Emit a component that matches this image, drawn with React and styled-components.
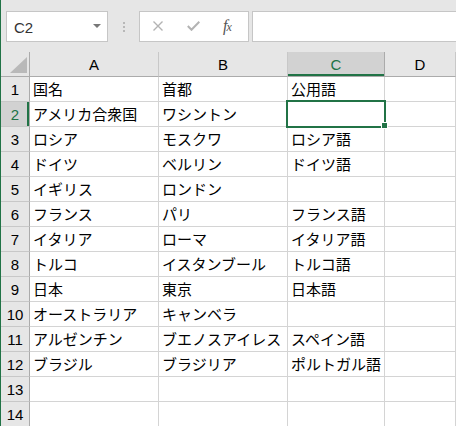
import React from 'react';
import styled, { createGlobalStyle } from 'styled-components';

const GlobalStyle = createGlobalStyle`
  html, body {
    margin: 0;
    padding: 0;
    background: #ffffff;
  }
  body {
    font-family: "Liberation Sans", Arial, sans-serif;
  }
`;

const GREEN = '#217346';

const Window = styled.div`
  width: 456px;
  height: 426px;
  overflow: hidden;
  border-left: 1px solid ${GREEN};
  box-sizing: border-box;
  display: flex;
  flex-direction: column;
  background: #e6e6e6;
`;

const FormulaBar = styled.div`
  height: 52px;
  flex: none;
  display: flex;
  align-items: flex-start;
  padding: 11px 0 0 5px;
  box-sizing: border-box;
  background: #e6e6e6;
`;

const NameBox = styled.div`
  width: 102px;
  height: 31px;
  box-sizing: border-box;
  background: #fff;
  border: 1px solid #c6c6c6;
  display: flex;
  align-items: center;
  justify-content: space-between;
  padding: 1px 6px 0 7px;
  font-size: 15px;
  color: #333;
`;

const Caret = styled.span`
  width: 0;
  height: 0;
  border-left: 4px solid transparent;
  border-right: 4px solid transparent;
  border-top: 4px solid #777;
  margin-bottom: 3px;
`;

const Grip = styled.div`
  width: 31px;
  height: 31px;
  display: flex;
  flex-direction: column;
  align-items: center;
  justify-content: center;
  gap: 2px;
  & > span {
    width: 2px;
    height: 2px;
    background: #b8b8b8;
  }
`;

const IconBox = styled.div`
  width: 110px;
  height: 31px;
  box-sizing: border-box;
  background: #fff;
  border: 1px solid #c6c6c6;
  display: flex;
  align-items: center;
  padding: 0 0 1px 13px;
  gap: 24px;
`;

const Fx = styled.span`
  font-family: "Liberation Serif", "DejaVu Serif", serif;
  font-style: italic;
  font-size: 16px;
  line-height: 1;
  color: #555;
  margin-left: -1px;
  & > span {
    font-size: 12px;
    margin-left: -1px;
  }
`;

const FormulaInput = styled.div`
  flex: 1;
  height: 31px;
  margin-left: 3px;
  box-sizing: border-box;
  background: #fff;
  border: 1px solid #c6c6c6;
  border-right: none;
`;

const Sheet = styled.div`
  flex: 1;
  display: grid;
  grid-template-columns: 29px 129px 129px 97px 1fr;
  grid-auto-rows: 25px;
  background: #fff;
`;

const Corner = styled.div`
  background: #e6e6e6;
  border-right: 1px solid #ababab;
  border-bottom: 1px solid #ababab;
  box-sizing: border-box;
  display: flex;
  align-items: flex-end;
  justify-content: flex-end;
  padding: 0 2px 3px 0;
`;

const ColHead = styled.div`
  box-sizing: border-box;
  background: ${p => (p.$active ? '#d2d2d2' : '#e6e6e6')};
  color: ${p => (p.$active ? GREEN : '#000')};
  border-right: 1px solid ${p => (p.$active ? '#ababab' : '#c8c8c8')};
  border-bottom: 1px solid #ababab;
  box-shadow: ${p => (p.$active ? `inset 0 -2px 0 ${GREEN}` : 'none')};
  display: flex;
  align-items: center;
  justify-content: center;
  font-size: 15px;
  padding-top: 1px;
`;

const RowHead = styled.div`
  box-sizing: border-box;
  background: ${p => (p.$active ? '#d2d2d2' : '#e6e6e6')};
  color: ${p => (p.$active ? GREEN : '#000')};
  border-right: 1px solid #ababab;
  border-bottom: 1px solid #c8c8c8;
  box-shadow: ${p => (p.$active ? `inset -2px 0 0 ${GREEN}` : 'none')};
  display: flex;
  align-items: center;
  justify-content: center;
  font-size: 15px;
  padding-top: 1px;
`;

const Cell = styled.div`
  position: relative;
  box-sizing: border-box;
  border-right: 1px solid #d4d4d4;
  border-bottom: 1px solid #d4d4d4;
  padding: 0 0 2px 3px;
  display: flex;
  align-items: center;
  white-space: nowrap;
  font-family: "Noto Sans CJK JP", "Liberation Sans", sans-serif;
  font-size: 15px;
  line-height: 1;
  color: #000;
  z-index: ${p => (p.$selected ? 2 : 1)};
`;

const Selection = styled.div`
  position: absolute;
  left: -2px;
  top: -2px;
  width: 100px;
  height: 28px;
  box-sizing: border-box;
  border: 2px solid ${GREEN};
  pointer-events: none;
`;

const Handle = styled.div`
  position: absolute;
  left: 93px;
  top: 20px;
  width: 7px;
  height: 7px;
  box-sizing: border-box;
  background: ${GREEN};
  border: 1px solid #fff;
`;

const columns = ['A', 'B', 'C', 'D'];

const rows = [
  ['国名', '首都', '公用語'],
  ['アメリカ合衆国', 'ワシントン', ''],
  ['ロシア', 'モスクワ', 'ロシア語'],
  ['ドイツ', 'ベルリン', 'ドイツ語'],
  ['イギリス', 'ロンドン', ''],
  ['フランス', 'パリ', 'フランス語'],
  ['イタリア', 'ローマ', 'イタリア語'],
  ['トルコ', 'イスタンブール', 'トルコ語'],
  ['日本', '東京', '日本語'],
  ['オーストラリア', 'キャンベラ', ''],
  ['アルゼンチン', 'ブエノスアイレス', 'スペイン語'],
  ['ブラジル', 'ブラジリア', 'ポルトガル語'],
  ['', '', ''],
  ['', '', ''],
];

export default function App() {
  return (
    <>
      <GlobalStyle />
      <Window>
        <FormulaBar>
          <NameBox>
            C2
            <Caret />
          </NameBox>
          <Grip>
            <span />
            <span />
            <span />
          </Grip>
          <IconBox>
            <svg width="10" height="10" viewBox="0 0 10 10">
              <path d="M0.5 0.5 L9.5 9.5 M9.5 0.5 L0.5 9.5" stroke="#b3b3b3" strokeWidth="1.4" fill="none" />
            </svg>
            <svg width="13" height="10" viewBox="0 0 13 10">
              <path d="M0.8 5 L4.5 8.8 L12.3 0.8" stroke="#b3b3b3" strokeWidth="2" fill="none" />
            </svg>
            <Fx>
              f<span>x</span>
            </Fx>
          </IconBox>
          <FormulaInput />
        </FormulaBar>
        <Sheet>
          <Corner>
            <svg width="17" height="16" viewBox="0 0 17 16">
              <polygon points="17,0 17,16 0,16" fill="#b9b9b9" />
            </svg>
          </Corner>
          {columns.map(c => (
            <ColHead key={c} $active={c === 'C'}>
              {c}
            </ColHead>
          ))}
          {rows.map((r, i) => (
            <React.Fragment key={i}>
              <RowHead $active={i === 1}>{i + 1}</RowHead>
              {r.map((v, j) => {
                const selected = i === 1 && j === 2;
                return (
                  <Cell key={j} $selected={selected}>
                    {v}
                    {selected && (
                      <Selection>
                        <Handle />
                      </Selection>
                    )}
                  </Cell>
                );
              })}
              <Cell />
            </React.Fragment>
          ))}
        </Sheet>
      </Window>
    </>
  );
}
